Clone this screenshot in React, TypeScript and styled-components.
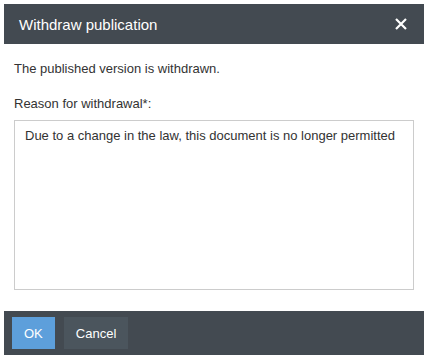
import styled, { createGlobalStyle } from 'styled-components'

const GlobalStyle = createGlobalStyle`
  body {
    margin: 0;
    background: #ffffff;
    font-family: Arial, "Liberation Sans", sans-serif;
  }
`

const Page = styled.div`
  padding: 4px;
  width: 428px;
  height: 359px;
  box-sizing: border-box;
`

const Dialog = styled.div`
  display: flex;
  flex-direction: column;
  height: 351px;
  background: #fff;
`

const Header = styled.div`
  display: flex;
  align-items: center;
  justify-content: space-between;
  height: 40px;
  padding: 0 17px 0 15px;
  background: #434a51;
  color: #fff;
`

const Title = styled.h1`
  margin: 0;
  font-size: 15px;
  font-weight: normal;
`

const Close = styled.button`
  display: flex;
  padding: 0;
  border: 0;
  background: none;
  cursor: pointer;
`

const Body = styled.div`
  flex: 1;
  padding: 17px 10px 0;
`

const Text = styled.p`
  margin: 0 0 20px;
  font-size: 13px;
  line-height: 15px;
  color: #333;
`

const Label = styled.label`
  display: block;
  margin-bottom: 9px;
  font-size: 13px;
  line-height: 15px;
  color: #333;
`

const Reason = styled.textarea`
  display: block;
  width: 400px;
  height: 170px;
  box-sizing: border-box;
  padding: 7px 10px;
  border: 1px solid #cccccc;
  resize: none;
  font-family: Arial, "Liberation Sans", sans-serif;
  font-size: 13px;
  color: #333;
  outline: none;
`

const Footer = styled.div`
  display: flex;
  gap: 9px;
  align-items: center;
  height: 44px;
  padding: 0 8px;
  background: #434a51;
`

const Button = styled.button<{ primary?: boolean }>`
  height: 32px;
  padding: 0 12px;
  border: 0;
  background: ${(p) => (p.primary ? '#5d9fdb' : '#4b555d')};
  color: #fff;
  font-family: Arial, "Liberation Sans", sans-serif;
  font-size: 13px;
  cursor: pointer;
`

export default function App() {
  return (
    <Page>
      <GlobalStyle />
      <Dialog>
        <Header>
          <Title>Withdraw publication</Title>
          <Close aria-label="Close">
            <svg width="12" height="12" viewBox="0 0 12 12">
              <path d="M1 1L11 11M11 1L1 11" stroke="#fff" strokeWidth="2.2" />
            </svg>
          </Close>
        </Header>
        <Body>
          <Text>The published version is withdrawn.</Text>
          <Label htmlFor="reason">Reason for withdrawal*:</Label>
          <Reason
            id="reason"
            defaultValue="Due to a change in the law, this document is no longer permitted"
          />
        </Body>
        <Footer>
          <Button primary>OK</Button>
          <Button>Cancel</Button>
        </Footer>
      </Dialog>
    </Page>
  )
}
